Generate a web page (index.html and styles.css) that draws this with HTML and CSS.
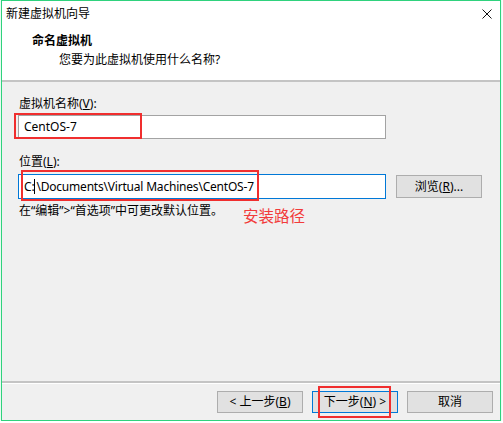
FILE: index.html
```html
<!DOCTYPE html>
<html lang="zh-CN">
<head>
<meta charset="utf-8">
<title>新建虚拟机向导</title>
<link rel="stylesheet" href="styles.css">
</head>
<body>
<div class="window">
  <div class="header">
    <div class="titlebar">
      <span class="title">新建虚拟机向导</span>
      <svg class="close" width="10" height="10" viewBox="0 0 10 10"><path d="M0.5 0.5 L9.5 9.5 M9.5 0.5 L0.5 9.5" stroke="#111" stroke-width="1" fill="none"/></svg>
    </div>
    <div class="heading">命名虚拟机</div>
    <div class="subheading">您要为此虚拟机使用什么名称?</div>
  </div>
  <div class="content">
    <div class="label">虚拟机名称(<u>V</u>):</div>
    <div class="textbox name-box">CentOS-7</div>
    <div class="label label-loc">位置(<u>L</u>):</div>
    <div class="loc-row">
      <div class="textbox loc-box focused">C:<span class="caret"></span>\Documents\Virtual Machines\CentOS-7</div>
      <div class="button browse">浏览(<u>R</u>)...</div>
    </div>
    <div class="hint">在“编辑”&gt;“首选项”中可更改默认位置。</div>
    <div class="note">安装路径</div>
    <div class="mark mark-name"></div>
    <div class="mark mark-loc"></div>
  </div>
  <div class="footer">
    <div class="button">&lt; 上一步(<u>B</u>)</div>
    <div class="button default">下一步(<u>N</u>) &gt;</div>
    <div class="button">取消</div>
    <div class="mark mark-next"></div>
  </div>
</div>
</body>
</html>
```

FILE: styles.css
```css
* { box-sizing: border-box; }
html, body { margin: 0; padding: 0; }
body {
  background: #ffffff;
  font-family: "Segoe UI", "Noto Sans", "Noto Sans CJK SC", sans-serif;
  font-size: 12px;
  color: #000;
}
.window {
  margin-left: 1px;
  width: 500px;
  height: 421px;
  border: 1px solid #2fd27d;
  background: #f0f0f0;
  display: flex;
  flex-direction: column;
  box-shadow: 0 0 2px rgba(47, 210, 125, 0.35);
}
.header {
  background: #fff;
  height: 81px;
  border-bottom: 2px solid #c4c4c4;
  flex: none;
}
.titlebar {
  height: 26px;
  display: flex;
  align-items: center;
  justify-content: space-between;
  padding-left: 4px;
  padding-right: 8px;
}
.title { line-height: 26px; }
.close { display: block; margin-top: -1px; }
.heading {
  margin-top: 5px;
  padding-left: 30px;
  font-weight: bold;
  line-height: 18px;
}
.subheading {
  margin-top: 1px;
  padding-left: 57px;
  line-height: 18px;
}
.content {
  flex: 1;
  position: relative;
  padding: 14px 0 0 16px;
}
.label {
  padding-left: 1px;
  line-height: 16px;
}
.label-loc { margin-top: 15px; }
.textbox {
  background: #fff;
  border: 1px solid #a3a3a3;
  height: 24px;
  line-height: 22px;
  padding-left: 5px;
  white-space: nowrap;
}
.name-box {
  margin-top: 3px;
  width: 368px;
}
.loc-row {
  margin-top: 4px;
  display: flex;
  align-items: center;
  gap: 10px;
}
.loc-box {
  width: 368px;
  height: 25px;
  line-height: 23px;
  letter-spacing: -0.2px;
}
.focused { border-color: #0078d7; }
.caret {
  display: inline-block;
  width: 1px;
  height: 15px;
  background: #000;
  vertical-align: -3px;
  margin: 0 1px 0 0;
}
.button {
  width: 86px;
  height: 22px;
  line-height: 20px;
  text-align: center;
  background: #e1e1e1;
  border: 1px solid #adadad;
  white-space: nowrap;
}
.browse { height: 23px; line-height: 21px; }
.default { border-color: #0078d7; }
.hint {
  margin-top: 4px;
  padding-left: 1px;
  line-height: 16px;
}
.note {
  position: absolute;
  left: 241px;
  top: 124px;
  color: #f23b3b;
  font-size: 15.5px;
  line-height: 20px;
}
.mark {
  position: absolute;
  border: 2px solid #f02e2e;
}
.mark-name { left: 12px; top: 31px; width: 128px; height: 26px; }
.mark-loc { left: 19px; top: 88px; width: 238px; height: 31px; }
.footer {
  flex: none;
  position: relative;
  height: 39px;
  border-top: 2px solid #c4c4c4;
  box-shadow: inset 0 1px 0 #fff;
  display: flex;
  justify-content: flex-end;
  gap: 9px;
  padding: 8px 7px 0 0;
}
.mark-next { left: 316px; top: 3px; width: 73px; height: 32px; }
```
